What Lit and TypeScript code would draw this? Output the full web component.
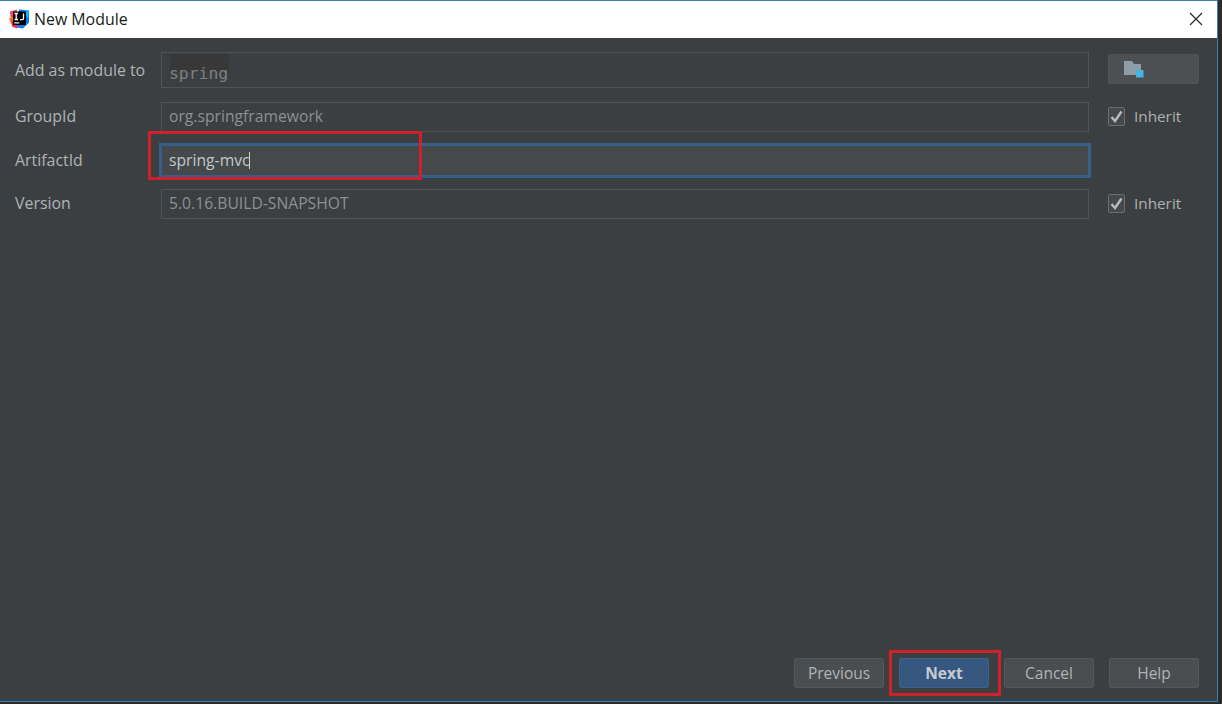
import { LitElement, html, css } from "lit";
import { customElement } from "lit/decorators.js";

@customElement("app-root")
export class AppRoot extends LitElement {
  static styles = css`
    :host { display: block; width: 1222px; height: 704px; background: #2b2b2b; position: relative; overflow: hidden; font-family: "Open Sans", "Noto Sans", sans-serif; }
    .win { width: 1218px; height: 702px; box-sizing: border-box; border: 1px solid #3a7db0; border-left: 0; display: flex; flex-direction: column; }
    .title { height: 37px; background: #fff; display: flex; align-items: center; padding: 0 0 2px 9px; gap: 5px; flex: none; box-sizing: border-box; }
    .title span { font-size: 15.9px; color: #1a1a1a; flex: 1; }
    .close { flex: none; margin-right: 14px; }
    .body { flex: 1; background: #3c3f41; display: flex; flex-direction: column; justify-content: space-between; padding: 7px 18px 13px 15px; min-height: 0; }
    .form { display: grid; grid-template-columns: 146px 928px 91px; align-items: center; }
    .form .lab { font-size: 15.9px; color: #b0b3b5; height: 100%; display: flex; align-items: center; box-sizing: border-box; }
    .lab.up { padding-bottom: 2px; }
    .cell { display: flex; align-items: center; }
    .field { box-sizing: border-box; flex: none; width: 928px; height: 30px; border: 1px solid #505356; background: #3c3f41; color: #8d9092; font-size: 15.7px; display: flex; align-items: center; padding: 0 7px 2px; white-space: nowrap; }
    .field.first { height: 36px; padding-bottom: 0; background: linear-gradient(#383838, #383838) no-repeat 8px 1px / 59px 18px #3c3f41; }
    .mono { font-family: "DejaVu Sans Mono", "Liberation Mono", monospace; font-size: 16.4px; color: #7d8082; margin-top: 8px; line-height: 20px; }
    .field.focus { width: 932px; height: 35px; margin-left: -2px; border: 3px solid #365f8b; background: #45494a; color: #c4c7c9; padding: 0 7px; }
    .caret { display: inline-block; width: 1px; height: 17px; background: #d0d0d0; margin-left: -1px; }
    .r1 { height: 50px; } .r2 { height: 43px; } .r3 { height: 44px; } .r4 { height: 43px; }
    .side { margin-left: 19px; display: flex; align-items: center; gap: 9px; color: #aeb1b3; font-size: 15.3px; padding-bottom: 1px; }
    .check { box-sizing: border-box; width: 19px; height: 19px; border: 1px solid #6b6e70; border-radius: 2px; background: #46494b; display: flex; align-items: center; justify-content: center; }
    .browse { margin-left: 19px; box-sizing: border-box; width: 91px; height: 30px; background: #4c5052; border: 1px solid #505355; border-radius: 2px; display: flex; align-items: center; padding-left: 15px; margin-bottom: 2px; }
    .buttons { display: flex; justify-content: flex-end; gap: 15px; }
    .btn { box-sizing: border-box; width: 90px; height: 30px; background: #4b4e50; border: 1px solid #55585a; border-radius: 2px; color: #b0b3b5; font-size: 15.5px; display: flex; align-items: center; justify-content: center; }
    .btn.primary { background: #365880; border-color: #3d6185; color: #c5cbd2; font-weight: 700; }
    .mark { position: absolute; box-sizing: border-box; border: 3px solid #d0202c; pointer-events: none; }
    .m1 { left: 148px; top: 131px; width: 274px; height: 49px; }
    .m2 { left: 889px; top: 650px; width: 112px; height: 46px; }
  `;

  check() {
    return html`<span class="check"><svg width="15" height="15" viewBox="0 0 15 15"><path d="M2.5 8 L6 12 L12.5 2.5" fill="none" stroke="#b8babb" stroke-width="2.4"/></svg></span>`;
  }

  render() {
    return html`
      <div class="win">
        <div class="title">
          <svg width="20" height="21" viewBox="0 0 20 20">
            <path d="M1 3 L8 1 L7 11 L2 13 Z" fill="#fc3f6c"/>
            <path d="M0 10 L5 8 L6 16 L2 15 Z" fill="#f97a12"/>
            <path d="M2 12 L10 13 L8 20 L3 18 Z" fill="#fe2857"/>
            <path d="M10 1 L20 2 L20 14 L14 20 L8 19 Z" fill="#087cfa"/>
            <path d="M15 1 L20 4 L19 10 Z" fill="#07c3f2"/>
            <rect x="4" y="3" width="13" height="13.5" fill="#000"/>
            <rect x="5.3" y="13.8" width="5" height="1.2" fill="#fff"/>
            <path d="M5.5 5 H9 M7.2 5 V11 M5.5 11 H9 M14.5 5 V10 Q14.5 11.2 13 11.2 H11" fill="none" stroke="#fff" stroke-width="1.3"/>
          </svg>
          <span>New Module</span>
          <svg class="close" width="14" height="14" viewBox="0 0 14 14"><path d="M1 1 L13 13 M13 1 L1 13" stroke="#222" stroke-width="1.1" fill="none"/></svg>
        </div>
        <div class="body">
          <div class="form">
            <div class="lab r1">Add as module to</div>
            <div class="cell r1"><div class="field first"><span class="mono">spring</span></div></div>
            <div class="browse">
              <svg width="20" height="17" viewBox="0 0 20 17"><path d="M0 0 H8 L10 3 H17 V9 H12 V14 H0 Z" fill="#8f9ba5"/><rect x="12" y="9" width="7.5" height="7.5" fill="#40b6e0"/></svg>
            </div>
            <div class="lab up r2">GroupId</div>
            <div class="cell r2"><div class="field">org.springframework</div></div>
            <div class="side">${this.check()}Inherit</div>
            <div class="lab r3">ArtifactId</div>
            <div class="cell r3"><div class="field focus">spring-mvc<i class="caret"></i></div></div>
            <div></div>
            <div class="lab up r4">Version</div>
            <div class="cell r4"><div class="field">5.0.16.BUILD-SNAPSHOT</div></div>
            <div class="side">${this.check()}Inherit</div>
          </div>
          <div class="buttons">
            <div class="btn">Previous</div>
            <div class="btn primary">Next</div>
            <div class="btn">Cancel</div>
            <div class="btn">Help</div>
          </div>
        </div>
      </div>
      <div class="mark m1"></div>
      <div class="mark m2"></div>
    `;
  }
}
